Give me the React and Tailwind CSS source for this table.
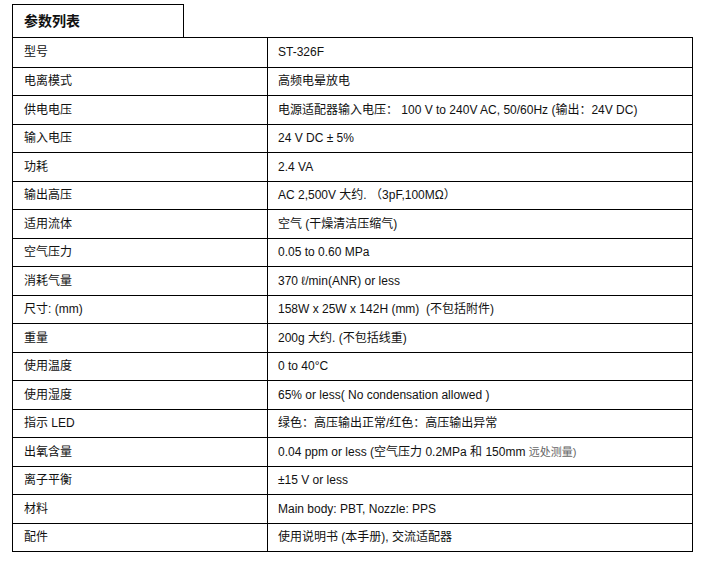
import React from 'react';

const rows = [
  ['型号', 'ST-326F'],
  ['电离模式', '高频电晕放电'],
  ['供电电压', '电源适配器输入电压： 100 V to 240V AC, 50/60Hz (输出：24V DC)'],
  ['输入电压', '24 V DC ± 5%'],
  ['功耗', '2.4 VA'],
  ['输出高压', 'AC 2,500V 大约. （3pF,100MΩ）'],
  ['适用流体', '空气 (干燥清洁压缩气)'],
  ['空气压力', '0.05 to 0.60 MPa'],
  ['消耗气量', '370 ℓ/min(ANR) or less'],
  ['尺寸: (mm)', '158W x 25W x 142H (mm)  (不包括附件)'],
  ['重量', '200g 大约. (不包括线重)'],
  ['使用温度', '0 to 40°C'],
  ['使用湿度', '65% or less( No condensation allowed )'],
  ['指示 LED', '绿色：高压输出正常/红色：高压输出异常'],
  ['出氧含量', null],
  ['离子平衡', '±15 V or less'],
  ['材料', 'Main body: PBT, Nozzle: PPS'],
  ['配件', '使用说明书 (本手册), 交流适配器'],
];

const App = () => {
  return (
    <div className="bg-white w-[702px] h-[568px] pl-[12px] pt-[4px] font-['Liberation_Sans','Noto_Sans_CJK_SC',sans-serif] text-[12px] text-[#111]">
      {/* Title tab */}
      <div className="w-[172px] h-[33px] border-t border-x border-black flex items-center pl-[11px]">
        <span className="text-[14px] font-bold">参数列表</span>
      </div>

      {/* Spec table */}
      <div className="w-[681px] border border-black">
        {rows.map(([label, value], i) => (
          <div
            key={label}
            className={`flex h-[28.5px] ${i > 0 ? 'border-t border-black' : ''}`}
          >
            <div className="w-[255px] shrink-0 border-r border-black flex items-center pl-[11px]">
              {label}
            </div>
            <div className="flex-1 flex items-center pl-[10px] whitespace-pre">
              {value ?? (
                <>
                  0.04 ppm or less (空气压力 0.2MPa 和 150mm{' '}
                  <span className="text-[#666] text-[11px]">远处测量)</span>
                </>
              )}
            </div>
          </div>
        ))}
      </div>
    </div>
  );
};

export default App;
